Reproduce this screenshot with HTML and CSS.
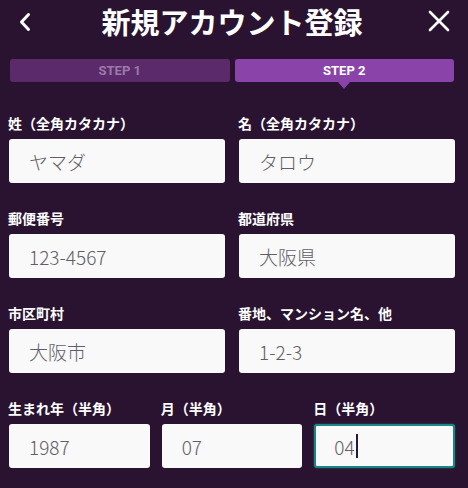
FILE: index.html
```html
<!DOCTYPE html>
<html lang="ja">
<head>
<meta charset="utf-8">
<title>新規アカウント登録</title>
<link rel="stylesheet" href="styles.css">
</head>
<body>
<div class="page">
  <header class="header">
    <span class="icon back">
      <svg width="24" height="24" viewBox="0 0 24 24"><path d="M15.5 4.5 L8.5 12 L15.5 19.5" fill="none" stroke="#fff" stroke-width="3" stroke-linecap="round" stroke-linejoin="round"/></svg>
    </span>
    <h1 class="title">新規アカウント登録</h1>
    <span class="icon close">
      <svg width="24" height="24" viewBox="0 0 24 24"><path d="M3 2 L21 20 M21 2 L3 20" fill="none" stroke="#fff" stroke-width="2.6" stroke-linecap="round"/></svg>
    </span>
  </header>

  <div class="steps">
    <div class="step">STEP 1</div>
    <div class="step active">STEP 2</div>
  </div>

  <div class="form">
    <div class="row two">
      <div class="field"><div class="label">姓（全角カタカナ）</div><div class="input">ヤマダ</div></div>
      <div class="field"><div class="label">名（全角カタカナ）</div><div class="input">タロウ</div></div>
    </div>
    <div class="row two">
      <div class="field"><div class="label">郵便番号</div><div class="input">123-4567</div></div>
      <div class="field"><div class="label">都道府県</div><div class="input">大阪県</div></div>
    </div>
    <div class="row two">
      <div class="field"><div class="label">市区町村</div><div class="input">大阪市</div></div>
      <div class="field"><div class="label">番地、マンション名、他</div><div class="input">1-2-3</div></div>
    </div>
    <div class="row three">
      <div class="field"><div class="label">生まれ年（半角）</div><div class="input">1987</div></div>
      <div class="field"><div class="label">月（半角）</div><div class="input">07</div></div>
      <div class="field"><div class="label">日（半角）</div><div class="input focused">04<span class="caret"></span></div></div>
    </div>
  </div>
</div>
</body>
</html>
```

FILE: styles.css
```css
html, body {
  margin: 0;
  padding: 0;
  background: #2a1331;
}

body {
  font-family: "Noto Sans CJK JP", "Noto Sans", sans-serif;
  color: #fff;
}

.page {
  width: 468px;
  height: 488px;
  overflow: hidden;
}

.header {
  display: grid;
  grid-template-columns: 1fr auto 1fr;
  align-items: center;
  height: 44px;
  padding: 0 17px 0 13px;
}

.icon {
  display: flex;
  width: 24px;
  height: 24px;
}

.back { justify-self: start; }
.close { justify-self: end; }

.title {
  margin: -2px 0 0 0;
  font-size: 29px;
  line-height: 44px;
  font-weight: 700;
  color: #fff;
  white-space: nowrap;
}

.steps {
  display: flex;
  gap: 5px;
  margin-top: 15px;
  padding: 0 14px 0 10px;
}

.step {
  flex: 1;
  height: 23px;
  line-height: 23px;
  border-radius: 3px;
  background: #5b2a6b;
  color: #9b7aa8;
  font-family: Roboto, "Liberation Sans", sans-serif;
  font-weight: 700;
  font-size: 13px;
  text-align: center;
}

.step.active {
  position: relative;
  background: #8a43a8;
  color: #fff;
}

.step.active::after {
  content: "";
  position: absolute;
  left: 50%;
  bottom: -7px;
  margin-left: -6px;
  border-left: 6px solid transparent;
  border-right: 6px solid transparent;
  border-top: 7px solid #8a43a8;
}

.form {
  display: flex;
  flex-direction: column;
  gap: 25px;
  margin-top: 31px;
  padding: 0 13px 0 9px;
}

.row {
  display: grid;
}

.row.two {
  grid-template-columns: 1fr 1fr;
  column-gap: 14px;
}

.row.three {
  grid-template-columns: 1fr 1fr 1fr;
  column-gap: 12px;
}

.label {
  margin: 0 0 6px -1px;
  font-size: 14px;
  line-height: 20px;
  font-weight: 700;
  color: #fff;
  white-space: nowrap;
}

.input {
  display: flex;
  align-items: center;
  box-sizing: border-box;
  height: 44px;
  padding-left: 20px;
  background: #f9f9f9;
  border-radius: 3px;
  color: #625d68;
  font-size: 19px;
  font-weight: 300;
}

.input.focused {
  border: 2px solid #1a8786;
  padding-left: 18px;
  box-shadow: 0 0 2px rgba(30, 160, 160, 0.6);
}

.caret {
  display: inline-block;
  width: 2px;
  height: 24px;
  margin-left: 1px;
  background: #2a1838;
}
```
